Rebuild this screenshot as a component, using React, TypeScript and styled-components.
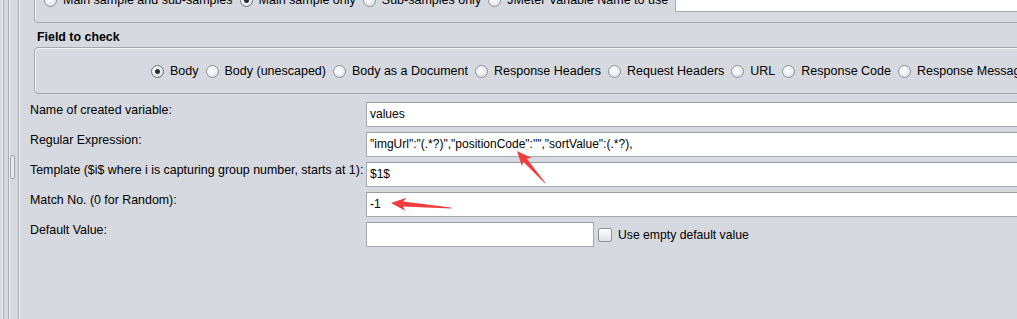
import React from 'react';
import styled, { createGlobalStyle } from 'styled-components';

const BG = '#d6d9df';

const GlobalStyle = createGlobalStyle`
  html, body {
    margin: 0;
    padding: 0;
    background: ${BG};
  }
  body {
    font-family: 'Liberation Sans', Arial, sans-serif;
    font-size: 12px;
    color: #000;
  }
`;

const Frame = styled.div`
  position: relative;
  display: flex;
  width: 1017px;
  height: 319px;
  overflow: hidden;
  background: ${BG};
`;

const SplitStrip = styled.div`
  position: relative;
  flex: 0 0 19px;
  background: linear-gradient(
    to right,
    ${BG} 0 2px,
    #f2f3f5 2px 3px,
    #a9acb2 3px 4px,
    ${BG} 4px 8px,
    #a9acb2 8px 9px,
    #f2f3f5 9px 10px,
    ${BG} 10px 18px,
    #a9acb2 18px 19px
  );
`;

const Handle = styled.div`
  position: absolute;
  left: 10px;
  top: 155px;
  width: 3px;
  height: 22px;
  border: 1px solid #9ea1a7;
  border-radius: 2px;
  background: #e9ebee;
`;

const Content = styled.div`
  flex: 1;
  min-width: 0;
  overflow: hidden;
  border-left: 1px solid #f4f5f7;
`;

const GroupBox = styled.div<{ $top?: number }>`
  margin: ${(p) => p.$top ?? 0}px -12px 0 14px;
  border: 1px solid #a4a7ad;
  border-radius: 4px;
  box-shadow: inset 1px 1px 0 #f3f4f6;
  padding: ${(p) => (p.$top ? '16px 0 10px 9px' : '15px 0 14px 116px')};
`;

const RadioRow = styled.div`
  display: flex;
  align-items: center;
  white-space: nowrap;
  min-height: 16px;
  font-size: 12.5px;
`;

const RadioItem = styled.label`
  display: inline-flex;
  align-items: center;
  gap: 6px;
  margin-right: 7px;
  flex-shrink: 0;
`;

const RadioCircle = styled.span<{ $on?: boolean }>`
  position: relative;
  width: 11px;
  height: 11px;
  border-radius: 50%;
  border: 1px solid ${(p) => (p.$on ? '#6d7077' : '#8e9197')};
  background: radial-gradient(circle at 40% 35%, #ffffff 0%, #f1f2f4 45%, #cfd2d7 100%);

  &::after {
    content: '';
    display: ${(p) => (p.$on ? 'block' : 'none')};
    position: absolute;
    left: 3px;
    top: 3px;
    width: 5px;
    height: 5px;
    border-radius: 50%;
    background: #2b2d31;
  }
`;

const VarField = styled.div`
  flex: 1;
  height: 22px;
  background: #fff;
  border: 1px solid #a6a9ae;
`;

const SectionTitle = styled.div`
  margin: 7px 0 2px 17px;
  font-weight: bold;
  font-size: 12.4px;
  line-height: 15px;
`;

const Form = styled.div`
  display: flex;
  flex-direction: column;
  gap: 5px;
  margin-top: 8px;
  padding-left: 10px;
`;

const Row = styled.div`
  display: grid;
  grid-template-columns: 336px 1fr;
  align-items: start;
`;

const Label = styled.div`
  font-size: 12.4px;
  line-height: 14px;
  padding-top: 1px;
  white-space: nowrap;
`;

const FieldLine = styled.div`
  display: flex;
  align-items: center;
  margin-right: -4px;
`;

const TextField = styled.div<{ $w?: number }>`
  ${(p) => (p.$w ? `flex: 0 0 ${p.$w}px;` : 'flex: 1;')}
  box-sizing: border-box;
  height: 25px;
  padding: 0 3px;
  background: #fff;
  border: 1px solid #a6a9ae;
  border-top-color: #9b9ea4;
  font-size: 12px;
  line-height: 23px;
  white-space: nowrap;
  overflow: hidden;
`;

const CheckItem = styled.label`
  display: inline-flex;
  align-items: center;
  gap: 6px;
  margin-left: 4px;
  white-space: nowrap;
  font-size: 12.2px;
`;

const CheckBox = styled.span`
  width: 12px;
  height: 12px;
  border: 1px solid #8e9197;
  border-radius: 2px;
  background: linear-gradient(to bottom, #ffffff, #dfe2e6);
`;

const Overlay = styled.svg`
  position: absolute;
  left: 0;
  top: 0;
  pointer-events: none;
`;

const Radio = ({ label, on }: { label: string; on?: boolean }) => (
  <RadioItem>
    <RadioCircle $on={on} />
    {label}
  </RadioItem>
);

// tapered snipping-tool style arrow, tail -> tip
const arrowPoints = (tx: number, ty: number, hx: number, hy: number) => {
  const dx = hx - tx;
  const dy = hy - ty;
  const len = Math.hypot(dx, dy);
  const ux = dx / len;
  const uy = dy / len;
  const nx = -uy;
  const ny = ux;
  const hl = 15;
  const bx = hx - ux * hl;
  const by = hy - uy * hl;
  const pt = (x: number, y: number) => `${x.toFixed(1)},${y.toFixed(1)}`;
  return [
    pt(tx + nx * 0.4, ty + ny * 0.4),
    pt(bx + ux * 3 + nx * 2.4, by + uy * 3 + ny * 2.4),
    pt(bx + nx * 6.5, by + ny * 6.5),
    pt(hx, hy),
    pt(bx - nx * 6.5, by - ny * 6.5),
    pt(bx + ux * 3 - nx * 2.4, by + uy * 3 - ny * 2.4),
    pt(tx - nx * 0.4, ty - ny * 0.4),
  ].join(' ');
};

const fields = [
  { label: 'Name of created variable:', value: 'values' },
  { label: 'Regular Expression:', value: '"imgUrl":"(.*?)","positionCode":"","sortValue":(.*?),' },
  { label: 'Template ($i$ where i is capturing group number, starts at 1):', value: '$1$' },
  { label: 'Match No. (0 for Random):', value: '-1' },
];

const App = () => {
  return (
    <>
      <GlobalStyle />
      <Frame>
        <SplitStrip>
          <Handle />
        </SplitStrip>
        <Content>
          <GroupBox $top={-29}>
            <RadioRow>
              <Radio label="Main sample and sub-samples" />
              <Radio label="Main sample only" on />
              <Radio label="Sub-samples only" />
              <Radio label="JMeter Variable Name to use" />
              <VarField />
            </RadioRow>
          </GroupBox>
          <SectionTitle>Field to check</SectionTitle>
          <GroupBox>
            <RadioRow>
              <Radio label="Body" on />
              <Radio label="Body (unescaped)" />
              <Radio label="Body as a Document" />
              <Radio label="Response Headers" />
              <Radio label="Request Headers" />
              <Radio label="URL" />
              <Radio label="Response Code" />
              <Radio label="Response Message" />
            </RadioRow>
          </GroupBox>
          <Form>
            {fields.map((f) => (
              <Row key={f.label}>
                <Label>{f.label}</Label>
                <FieldLine>
                  <TextField>{f.value}</TextField>
                </FieldLine>
              </Row>
            ))}
            <Row>
              <Label>Default Value:</Label>
              <FieldLine>
                <TextField $w={228} />
                <CheckItem>
                  <CheckBox />
                  Use empty default value
                </CheckItem>
              </FieldLine>
            </Row>
          </Form>
        </Content>
        <Overlay width={1017} height={319} viewBox="0 0 1017 319">
          <polygon points={arrowPoints(545, 183, 517, 151)} fill="#f03c3c" />
          <polygon points={arrowPoints(451, 208, 391, 203)} fill="#f03c3c" />
        </Overlay>
      </Frame>
    </>
  );
};

export default App;
